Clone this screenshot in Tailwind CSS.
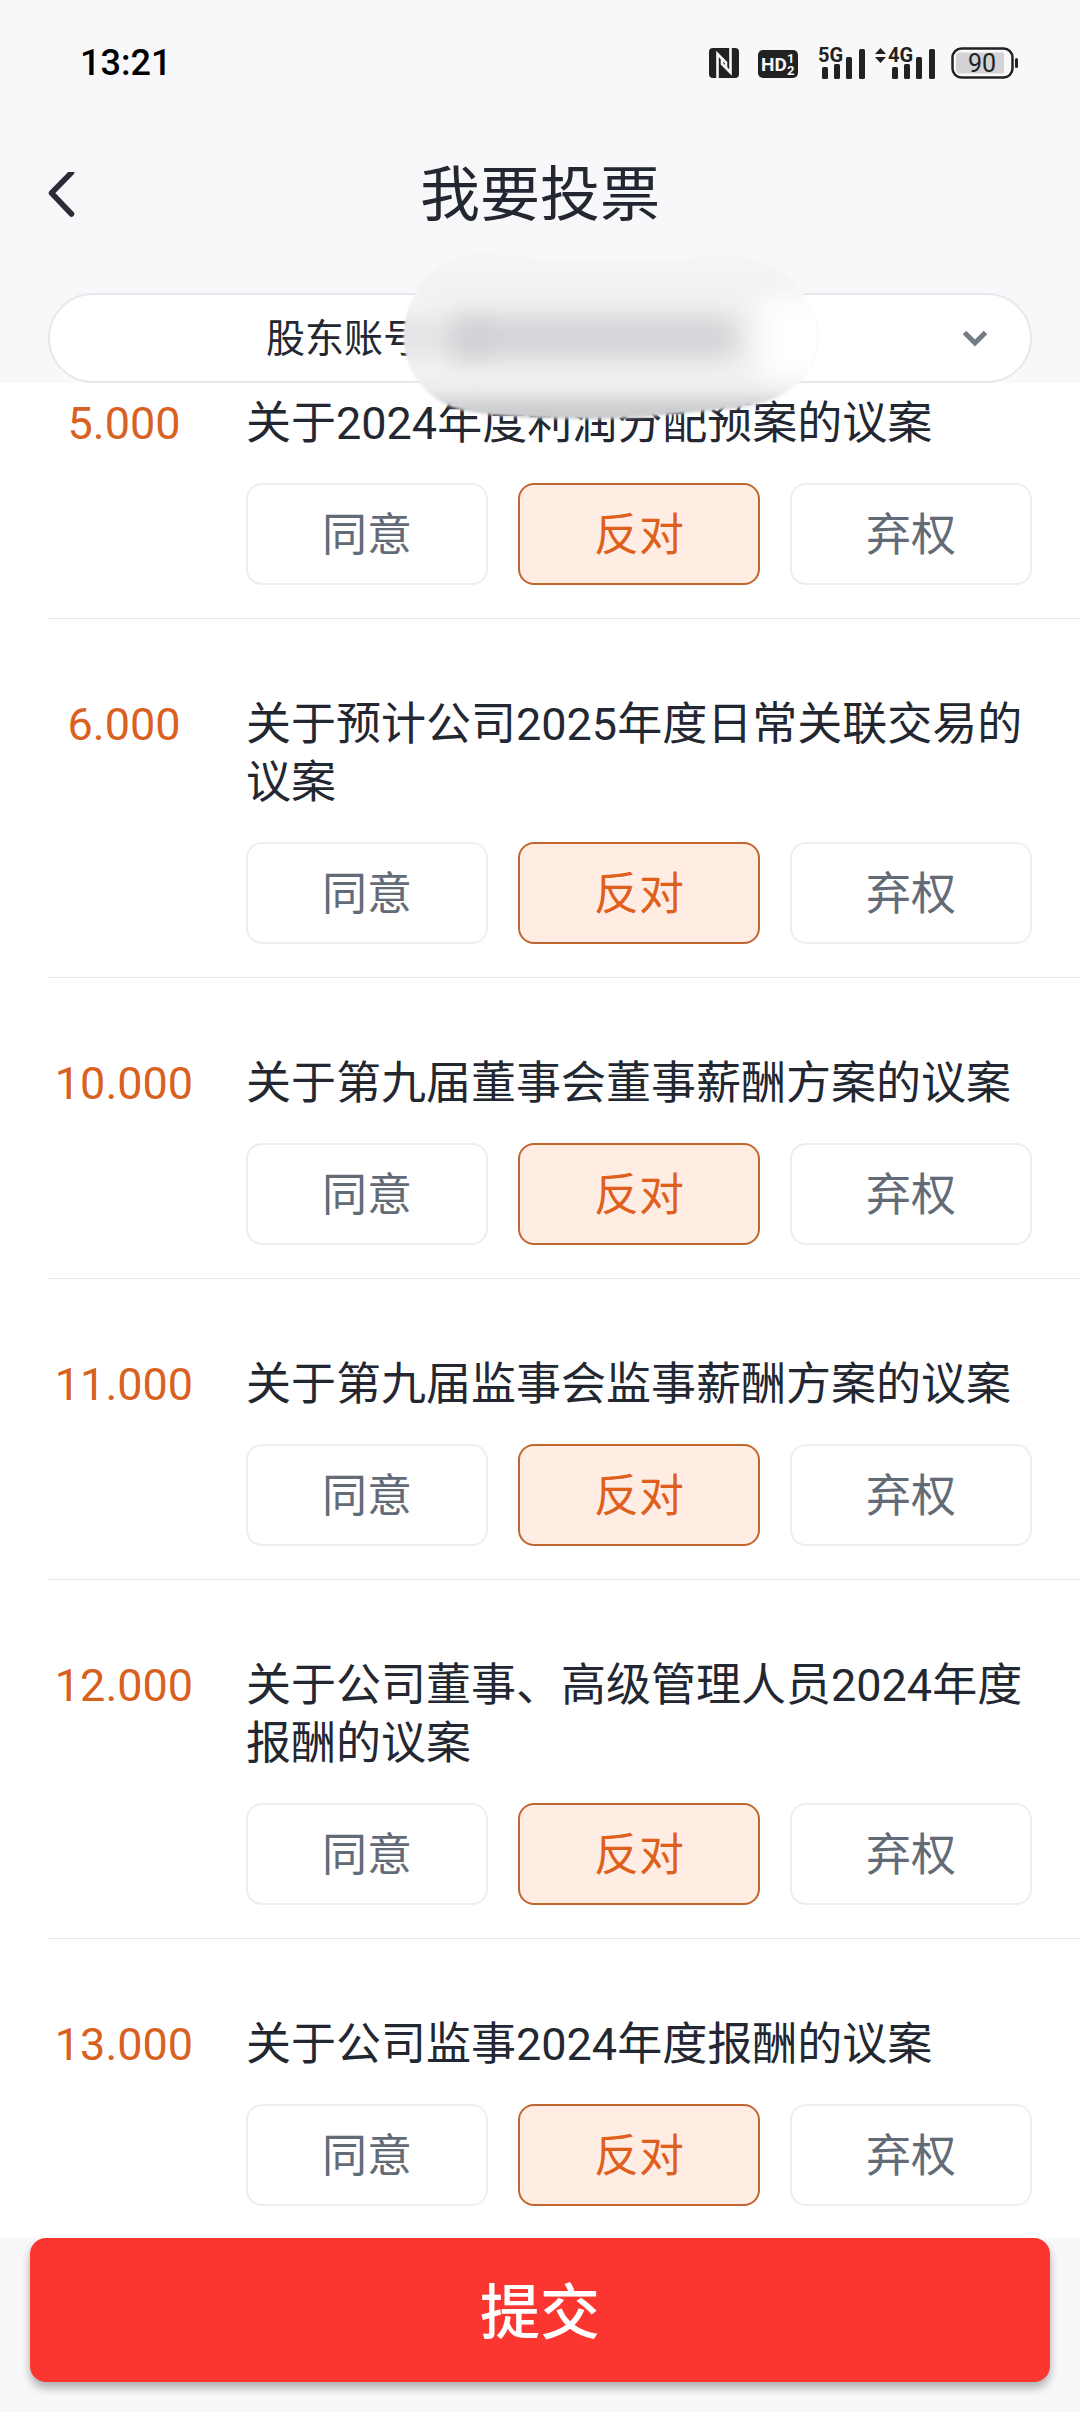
<!DOCTYPE html>
<html lang="zh-CN">
<head>
<meta charset="utf-8">
<meta name="viewport" content="width=device-width, initial-scale=1">
<title>我要投票</title>
<script src="https://cdn.jsdelivr.net/npm/@tailwindcss/browser@4"></script>
</head>
<body class="flex h-screen flex-col overflow-hidden bg-[#f8f8fb] font-[Roboto,'Noto_Sans_CJK_SC',sans-serif] text-[#232731]">

<header class="relative z-10 shrink-0">
  <!-- status bar -->
  <div class="flex h-[126px] items-center justify-between pl-20 pr-[62px]">
    <time class="text-[36px] font-medium leading-none text-black">13:21</time>
    <div class="flex items-center">
      <svg class="mr-[19px] h-[30px] w-[30px]" viewBox="0 0 30 30" aria-label="NFC">
        <rect width="30" height="30" rx="4" fill="#222"/>
        <path d="M8.500 30V6L17 14.500V20" fill="none" stroke="#f8f8fb" stroke-width="2.600"/>
        <path d="M21.500 0V24.500L13 16V10" fill="none" stroke="#f8f8fb" stroke-width="2.600"/>
      </svg>
      <svg class="mr-[17px] h-[30px] w-10" viewBox="0 0 40 30" aria-label="HD 1 2">
        <rect y="2" width="40" height="28" rx="5" fill="#222"/>
        <g fill="#f8f8fb" font-family="Roboto, sans-serif" font-weight="700">
          <text x="3" y="23" font-size="19">HD</text>
          <text x="29" y="15" font-size="13">1</text>
          <text x="29" y="27" font-size="13">2</text>
        </g>
      </svg>
      <svg class="mr-2.5 h-12 w-[50px]" viewBox="-4 -8 50 48" aria-label="5G">
        <g fill="#222">
          <text x="-1" y="15" font-size="20" font-weight="700" font-family="Roboto, sans-serif">5G</text>
          <rect x="3" y="20" width="6" height="12" rx="1.500"/>
          <rect x="15" y="17" width="6" height="15" rx="1.500"/>
          <rect x="27" y="10" width="6" height="22" rx="1.500"/>
          <rect x="40" y="2" width="6" height="30" rx="1.500"/>
        </g>
      </svg>
      <svg class="mr-4 h-12 w-[60px]" viewBox="0 -8 60 48" aria-label="4G">
        <g fill="#222">
          <path d="M5.500 1L11 7H0ZM5.500 16L11 10H0Z"/>
          <text x="13" y="15" font-size="20" font-weight="700" font-family="Roboto, sans-serif">4G</text>
          <rect x="17" y="20" width="6" height="12" rx="1.500"/>
          <rect x="29" y="17" width="6" height="15" rx="1.500"/>
          <rect x="41" y="10" width="6" height="22" rx="1.500"/>
          <rect x="54" y="2" width="6" height="30" rx="1.500"/>
        </g>
      </svg>
      <svg class="h-8 w-[67px]" viewBox="0 0 67 32" aria-label="90%">
        <rect x="1.500" y="1.500" width="60" height="29" rx="9" fill="none" stroke="#222" stroke-width="2.500"/>
        <path d="M9 5.500H53V26.500H9Q5 26.500 5 22.500V9.500Q5 5.500 9 5.500Z" fill="#d3d3d5"/>
        <rect x="64" y="11" width="3" height="10" rx="1.500" fill="#222"/>
        <text x="31" y="25" text-anchor="middle" font-size="25" fill="#222" font-family="Roboto, sans-serif">90</text>
      </svg>
    </div>
  </div>

  <!-- title bar -->
  <div class="grid h-[140px] grid-cols-[80px_1fr_80px] items-center px-12">
    <button type="button" aria-label="返回" class="flex h-20 w-20 items-center">
      <svg class="h-12 w-7" viewBox="0 2 28 48" fill="none" stroke="#2a2c38" stroke-width="5.500" stroke-linecap="round" stroke-linejoin="round"><path d="M23.500 0.500L3.500 21L23.500 42" transform="translate(0 2)"/></svg>
    </button>
    <h1 class="text-center text-[60px] leading-none">我要投票</h1>
  </div>

  <!-- shareholder account picker -->
  <div class="relative mx-12 mt-[27px]">
    <select aria-label="股东账号" class="block h-[90px] w-full appearance-none rounded-full border-2 border-[#e6e8ec] bg-white pl-[216px] pr-24 pt-[3px] text-[39px] leading-[57px]">
      <option>股东账号</option>
    </select>
    <svg class="pointer-events-none absolute right-[44px] top-[36px] h-[18px] w-[26px]" viewBox="0 0 26 18" fill="none" stroke="#737b84" stroke-width="5"><path d="M2.500 3.500L13 14L23.500 3.500"/></svg>
    <!-- privacy smudge over the account number -->
    <svg class="pointer-events-none absolute left-[342px] top-[-48px] h-[185px] w-[440px]" viewBox="0 0 440 185" aria-hidden="true">
      <defs>
        <linearGradient id="tone" x1="0" y1="0" x2="0" y2="185" gradientUnits="userSpaceOnUse">
          <stop offset="0.040" stop-color="#f6f6f8"/>
          <stop offset="0.220" stop-color="#f2f2f3"/>
          <stop offset="0.320" stop-color="#f3f3f4"/>
          <stop offset="0.700" stop-color="#f2f2f2"/>
          <stop offset="0.780" stop-color="#eaebeb"/>
          <stop offset="0.880" stop-color="#cfd0d2"/>
          <stop offset="0.950" stop-color="#c8c9cb"/>
        </linearGradient>
        <filter id="edge" x="-10%" y="-10%" width="120%" height="120%"><feGaussianBlur stdDeviation="1.500"/></filter>
        <filter id="soft" x="-40%" y="-120%" width="180%" height="340%"><feGaussianBlur stdDeviation="13"/></filter>
        <clipPath id="blob"><path d="M14 92C14 50 44 9 90 8C120 7 140 15 170 15C240 17 290 14 330 11C385 8 427 48 427 92C427 135 390 160 340 164C290 168 250 174 200 174C150 174 110 172 75 166C40 158 14 130 14 92Z"/></clipPath>
      </defs>
      <path filter="url(#edge)" fill="url(#tone)" d="M14 92C14 50 44 9 90 8C120 7 140 15 170 15C240 17 290 14 330 11C385 8 427 48 427 92C427 135 390 160 340 164C290 168 250 174 200 174C150 174 110 172 75 166C40 158 14 130 14 92Z"/>
      <g clip-path="url(#blob)">
        <rect x="372" y="52" width="90" height="84" fill="#fff" filter="url(#soft)"/>
        <rect x="0" y="74" width="70" height="36" fill="#e2e3e4" filter="url(#soft)"/>
        <rect x="62" y="70" width="286" height="44" rx="10" fill="#d3d4d7" filter="url(#soft)"/>
        <rect x="66" y="78" width="36" height="32" rx="10" fill="#cfd0d3" filter="url(#soft)"/>
      </g>
    </svg>
  </div>
</header>

<main class="min-h-0 flex-1 overflow-hidden bg-white">
  <form id="vote">
    <ul class="text-[45px] leading-[58px]">

      <li class="ml-12 flex gap-[46px] border-b border-[#e5e6e8] pb-[33px] pr-12 pt-3">
        <span class="w-[152px] shrink-0 text-center text-[#d9611f]">5.000</span>
        <fieldset class="min-w-0 flex-1">
          <legend class="mb-[30px]">关于2024年度利润分配预案的议案</legend>
          <div class="grid grid-cols-3 gap-[30px] text-[#636b76]">
            <label class="relative flex h-[102px] items-center justify-center rounded-2xl border-2 border-[#eceef1] pt-1 has-checked:border-[#c0672f] has-checked:bg-[#ffede4] has-checked:text-[#df601c]"><input type="radio" name="p5" class="sr-only">同意</label>
            <label class="relative flex h-[102px] items-center justify-center rounded-2xl border-2 border-[#eceef1] pt-1 has-checked:border-[#c0672f] has-checked:bg-[#ffede4] has-checked:text-[#df601c]"><input type="radio" name="p5" class="sr-only" checked>反对</label>
            <label class="relative flex h-[102px] items-center justify-center rounded-2xl border-2 border-[#eceef1] pt-1 has-checked:border-[#c0672f] has-checked:bg-[#ffede4] has-checked:text-[#df601c]"><input type="radio" name="p5" class="sr-only">弃权</label>
          </div>
        </fieldset>
      </li>

      <li class="ml-12 flex gap-[46px] border-b border-[#e5e6e8] pb-[33px] pr-12 pt-[77px]">
        <span class="w-[152px] shrink-0 text-center text-[#d9611f]">6.000</span>
        <fieldset class="min-w-0 flex-1">
          <legend class="mb-[30px]">关于预计公司2025年度日常关联交易的议案</legend>
          <div class="grid grid-cols-3 gap-[30px] text-[#636b76]">
            <label class="relative flex h-[102px] items-center justify-center rounded-2xl border-2 border-[#eceef1] pt-1 has-checked:border-[#c0672f] has-checked:bg-[#ffede4] has-checked:text-[#df601c]"><input type="radio" name="p6" class="sr-only">同意</label>
            <label class="relative flex h-[102px] items-center justify-center rounded-2xl border-2 border-[#eceef1] pt-1 has-checked:border-[#c0672f] has-checked:bg-[#ffede4] has-checked:text-[#df601c]"><input type="radio" name="p6" class="sr-only" checked>反对</label>
            <label class="relative flex h-[102px] items-center justify-center rounded-2xl border-2 border-[#eceef1] pt-1 has-checked:border-[#c0672f] has-checked:bg-[#ffede4] has-checked:text-[#df601c]"><input type="radio" name="p6" class="sr-only">弃权</label>
          </div>
        </fieldset>
      </li>

      <li class="ml-12 flex gap-[46px] border-b border-[#e5e6e8] pb-[33px] pr-12 pt-[77px]">
        <span class="w-[152px] shrink-0 text-center text-[#d9611f]">10.000</span>
        <fieldset class="min-w-0 flex-1">
          <legend class="mb-[30px]">关于第九届董事会董事薪酬方案的议案</legend>
          <div class="grid grid-cols-3 gap-[30px] text-[#636b76]">
            <label class="relative flex h-[102px] items-center justify-center rounded-2xl border-2 border-[#eceef1] pt-1 has-checked:border-[#c0672f] has-checked:bg-[#ffede4] has-checked:text-[#df601c]"><input type="radio" name="p10" class="sr-only">同意</label>
            <label class="relative flex h-[102px] items-center justify-center rounded-2xl border-2 border-[#eceef1] pt-1 has-checked:border-[#c0672f] has-checked:bg-[#ffede4] has-checked:text-[#df601c]"><input type="radio" name="p10" class="sr-only" checked>反对</label>
            <label class="relative flex h-[102px] items-center justify-center rounded-2xl border-2 border-[#eceef1] pt-1 has-checked:border-[#c0672f] has-checked:bg-[#ffede4] has-checked:text-[#df601c]"><input type="radio" name="p10" class="sr-only">弃权</label>
          </div>
        </fieldset>
      </li>

      <li class="ml-12 flex gap-[46px] border-b border-[#e5e6e8] pb-[33px] pr-12 pt-[77px]">
        <span class="w-[152px] shrink-0 text-center text-[#d9611f]">11.000</span>
        <fieldset class="min-w-0 flex-1">
          <legend class="mb-[30px]">关于第九届监事会监事薪酬方案的议案</legend>
          <div class="grid grid-cols-3 gap-[30px] text-[#636b76]">
            <label class="relative flex h-[102px] items-center justify-center rounded-2xl border-2 border-[#eceef1] pt-1 has-checked:border-[#c0672f] has-checked:bg-[#ffede4] has-checked:text-[#df601c]"><input type="radio" name="p11" class="sr-only">同意</label>
            <label class="relative flex h-[102px] items-center justify-center rounded-2xl border-2 border-[#eceef1] pt-1 has-checked:border-[#c0672f] has-checked:bg-[#ffede4] has-checked:text-[#df601c]"><input type="radio" name="p11" class="sr-only" checked>反对</label>
            <label class="relative flex h-[102px] items-center justify-center rounded-2xl border-2 border-[#eceef1] pt-1 has-checked:border-[#c0672f] has-checked:bg-[#ffede4] has-checked:text-[#df601c]"><input type="radio" name="p11" class="sr-only">弃权</label>
          </div>
        </fieldset>
      </li>

      <li class="ml-12 flex gap-[46px] border-b border-[#e5e6e8] pb-[33px] pr-12 pt-[77px]">
        <span class="w-[152px] shrink-0 text-center text-[#d9611f]">12.000</span>
        <fieldset class="min-w-0 flex-1">
          <legend class="mb-[30px]">关于公司董事、高级管理人员2024年度报酬的议案</legend>
          <div class="grid grid-cols-3 gap-[30px] text-[#636b76]">
            <label class="relative flex h-[102px] items-center justify-center rounded-2xl border-2 border-[#eceef1] pt-1 has-checked:border-[#c0672f] has-checked:bg-[#ffede4] has-checked:text-[#df601c]"><input type="radio" name="p12" class="sr-only">同意</label>
            <label class="relative flex h-[102px] items-center justify-center rounded-2xl border-2 border-[#eceef1] pt-1 has-checked:border-[#c0672f] has-checked:bg-[#ffede4] has-checked:text-[#df601c]"><input type="radio" name="p12" class="sr-only" checked>反对</label>
            <label class="relative flex h-[102px] items-center justify-center rounded-2xl border-2 border-[#eceef1] pt-1 has-checked:border-[#c0672f] has-checked:bg-[#ffede4] has-checked:text-[#df601c]"><input type="radio" name="p12" class="sr-only">弃权</label>
          </div>
        </fieldset>
      </li>

      <li class="ml-12 flex gap-[46px] border-b border-[#e5e6e8] pb-[33px] pr-12 pt-[77px]">
        <span class="w-[152px] shrink-0 text-center text-[#d9611f]">13.000</span>
        <fieldset class="min-w-0 flex-1">
          <legend class="mb-[30px]">关于公司监事2024年度报酬的议案</legend>
          <div class="grid grid-cols-3 gap-[30px] text-[#636b76]">
            <label class="relative flex h-[102px] items-center justify-center rounded-2xl border-2 border-[#eceef1] pt-1 has-checked:border-[#c0672f] has-checked:bg-[#ffede4] has-checked:text-[#df601c]"><input type="radio" name="p13" class="sr-only">同意</label>
            <label class="relative flex h-[102px] items-center justify-center rounded-2xl border-2 border-[#eceef1] pt-1 has-checked:border-[#c0672f] has-checked:bg-[#ffede4] has-checked:text-[#df601c]"><input type="radio" name="p13" class="sr-only" checked>反对</label>
            <label class="relative flex h-[102px] items-center justify-center rounded-2xl border-2 border-[#eceef1] pt-1 has-checked:border-[#c0672f] has-checked:bg-[#ffede4] has-checked:text-[#df601c]"><input type="radio" name="p13" class="sr-only">弃权</label>
          </div>
        </fieldset>
      </li>

    </ul>
  </form>
</main>

<footer class="shrink-0 px-[30px] pb-[30px]">
  <button type="submit" form="vote" class="block h-36 w-full rounded-2xl bg-[#fb3630] pt-2 text-[60px] font-medium leading-none text-white shadow-[0_6px_10px_rgba(0,0,0,0.3)]">提交</button>
</footer>

</body>
</html>
